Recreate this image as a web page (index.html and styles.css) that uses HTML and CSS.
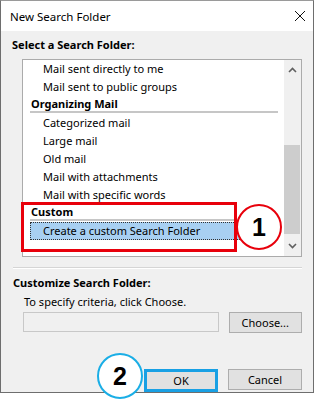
FILE: index.html
```html
<!DOCTYPE html>
<html lang="en">
<head>
    <meta charset="UTF-8">
    <meta name="viewport" content="width=device-width, initial-scale=1.0">
    <title>New Search Folder</title>

    <link rel="stylesheet" href="styles.css">
</head>
<body>
    <div class="window">
        <div class="titlebar">
            <span class="title">New Search Folder</span>
            <svg class="close" width="12" height="12" viewBox="0 0 12 12">
                <path d="M1 1 L11 11 M11 1 L1 11" stroke="#111" stroke-width="1" fill="none"/>
            </svg>
        </div>

        <div class="content">
            <div class="label label-top">Select a Search Folder:</div>

            <div class="listbox">
                <div class="list">
                    <div class="item">Mail sent directly to me</div>
                    <div class="item">Mail sent to public groups</div>
                    <div class="group">Organizing Mail</div>
                    <div class="item">Categorized mail</div>
                    <div class="item">Large mail</div>
                    <div class="item">Old mail</div>
                    <div class="item">Mail with attachments</div>
                    <div class="item">Mail with specific words</div>
                    <div class="group">Custom</div>
                    <div class="item selected">Create a custom Search Folder</div>
                </div>
                <div class="scrollbar">
                    <svg class="arrow" width="9" height="6" viewBox="0 0 9 6">
                        <path d="M1 5 L4.5 1.5 L8 5" stroke="#606060" stroke-width="1.6" fill="none"/>
                    </svg>
                    <div class="track">
                        <div class="thumb"></div>
                    </div>
                    <svg class="arrow" width="9" height="6" viewBox="0 0 9 6">
                        <path d="M1 1 L4.5 4.5 L8 1" stroke="#606060" stroke-width="1.6" fill="none"/>
                    </svg>
                </div>
            </div>

            <div class="divider"></div>

            <div class="label label-custom">Customize Search Folder:</div>
            <div class="hint">To specify criteria, click Choose.</div>
            <div class="choose-row">
                <div class="criteria"></div>
                <button class="btn">Choose...</button>
            </div>

            <div class="actions">
                <button class="btn btn-ok">OK</button>
                <button class="btn">Cancel</button>
            </div>
        </div>
    </div>

    <!-- callouts drawn over the dialog -->
    <div class="mark-box"></div>
    <div class="mark mark-red">1</div>
    <div class="mark mark-blue">2</div>
</body>
</html>
```

FILE: styles.css
```css
body {
    margin: 0;
    background-color: #fff;
    font-family: "Noto Sans", "Open Sans", sans-serif;
    font-size: 11px;
    color: #000;
}

.window {
    width: 312px;
    height: 391px;
    border: 1px solid #6e6e6e;
    border-top-color: #9a9a9a;
    background-color: #f0f0f0;
    display: flex;
    flex-direction: column;
}

.titlebar {
    height: 30px;
    background-color: #fff;
    display: flex;
    align-items: center;
    justify-content: space-between;
    padding: 0 7px 0 9px;
}

.title {
    font-size: 11.5px;
}

.close {
    margin-top: -1px;
}

.content {
    display: flex;
    flex-direction: column;
    padding: 0 11px 0 11px;
}

.label {
    font-weight: bold;
    height: 16px;
    line-height: 16px;
}

.label-top {
    margin-top: 6px;
}

.listbox {
    margin: 6px 0 0 10px;
    height: 196px;
    border: 1px solid #ababab;
    background-color: #fff;
    display: flex;
}

.list {
    flex: 1;
    padding: 0 6px 0 7px;
}

.item, .group {
    height: 18px;
    line-height: 18px;
    white-space: nowrap;
}

.item {
    padding-left: 13px;
}

.group {
    font-weight: bold;
    padding-left: 1px;
    height: 15px;
    line-height: 16px;
    border-bottom: 2px solid #c6c6c6;
    margin-bottom: 1px;
}

.selected {
    background-color: #a8d0f2;
    border: 1px dotted #333;
    padding-left: 12px;
    line-height: 16px;
    height: 16px;
}

.scrollbar {
    width: 17px;
    background-color: #f0f0f0;
    display: flex;
    flex-direction: column;
    align-items: center;
}

.arrow {
    margin: 7px 0;
}

.track {
    flex: 1;
    width: 100%;
    padding-top: 65px;
    padding-bottom: 2px;
    display: flex;
    flex-direction: column;
}

.thumb {
    flex: 1;
    margin: 0 1px 0 0;
    background-color: #cdcdcd;
}

.divider {
    margin: 10px 0 0 1px;
    border-top: 1px solid #d5d5d5;
    border-bottom: 1px solid #fff;
}

.label-custom {
    margin-top: 6px;
    padding-left: 1px;
}

.hint {
    margin-top: 3px;
    padding-left: 12px;
    height: 16px;
    line-height: 16px;
}

.choose-row {
    margin-top: 2px;
    padding-left: 11px;
    display: flex;
    gap: 10px;
}

.criteria {
    width: 195px;
    height: 18px;
    border: 1px solid #c8c8c8;
    background-color: #f0f0f0;
}

.btn {
    width: 74px;
    height: 21px;
    border: 1px solid #adadad;
    background-color: #e1e1e1;
    font-family: inherit;
    font-size: 11px;
    color: #000;
    padding: 0;
}

.actions {
    margin-top: 36px;
    display: flex;
    justify-content: flex-end;
    gap: 10px;
}

.btn-ok {
    height: 23px;
    border: 3px solid #18a0e4;
}

.mark-box {
    position: absolute;
    left: 21px;
    top: 202px;
    width: 210px;
    height: 44px;
    border: 3px solid #e8000b;
}

.mark {
    position: absolute;
    width: 42px;
    height: 42px;
    border-radius: 50%;
    background-color: #fff;
    display: flex;
    align-items: center;
    justify-content: center;
    font-family: "Liberation Sans", "Noto Sans", sans-serif;
    font-weight: bold;
    font-size: 25px;
}

.mark-red {
    left: 236px;
    top: 204px;
    border: 2px solid #e8000b;
}

.mark-blue {
    left: 97px;
    top: 353px;
    border: 2px solid #1aaee6;
}
```
